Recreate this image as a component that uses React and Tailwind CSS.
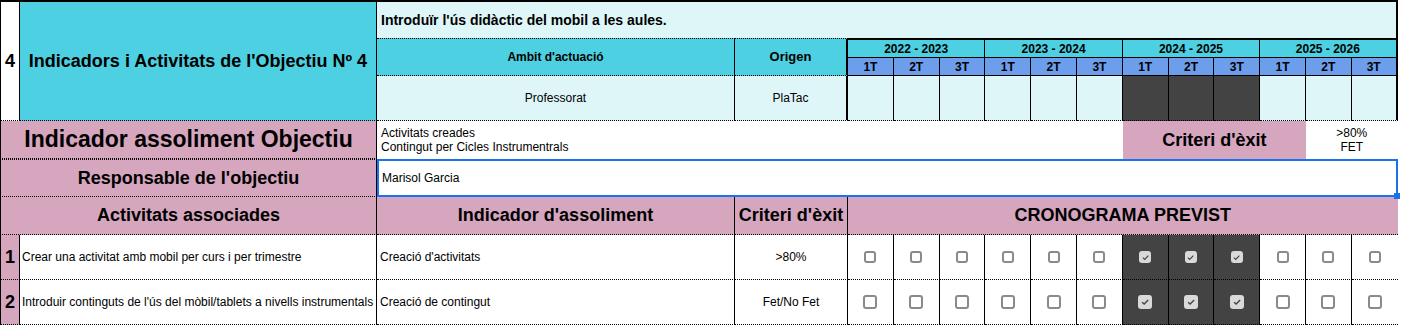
import clsx from "clsx"

const years = ["2022 - 2023", "2023 - 2024", "2024 - 2025", "2025 - 2026"]
const quarters = Array.from({ length: 12 }, (_, i) => ["1T", "2T", "3T"][i % 3])
const isActive = (i) => i >= 6 && i <= 8

const activitats = [
  { n: "1", text: "Crear una activitat amb mobil per curs i per trimestre", ind: "Creació d'activitats", crit: ">80%", big: false },
  { n: "2", text: "Introduir continguts de l'ús del mòbil/tablets a nivells instrumentals", ind: "Creació de contingut", crit: "Fet/No Fet", big: true },
]

const colStart = [
  "col-start-5", "col-start-6", "col-start-7", "col-start-8", "col-start-9", "col-start-10",
  "col-start-11", "col-start-12", "col-start-13", "col-start-14", "col-start-15", "col-start-16",
]
const yearStart = ["col-start-5", "col-start-8", "col-start-11", "col-start-14"]

// solid right edge, dotted bottom edge, like the sheet grid
const grid = "border-r border-b border-black [border-bottom-style:dotted]"

const Check = ({ checked, big }) => (
  <span
    className={clsx(
      "flex items-center justify-center rounded-[3px]",
      big ? "size-[14px]" : "size-3",
      checked ? "bg-[#d9d9d9]" : "border-2 border-[#8a8a8a] bg-white"
    )}
  >
    {checked && (
      <svg viewBox="0 0 12 12" className={big ? "size-[10px]" : "size-[9px]"}>
        <path d="M2.5 6.2 L5 8.5 L9.8 3.6" fill="none" stroke="#444" strokeWidth="1.6" />
      </svg>
    )}
  </span>
)

const App = () => (
  <div className="h-[327px] w-[1401px] bg-white font-['Liberation_Sans',Arial,sans-serif] text-black">
    <div className="grid w-[1398px] grid-cols-[20px_357px_358px_113px_repeat(12,45.8px)] grid-rows-[36px_20px_18px_45px_38px_38px_38px_45px_45px] border-t-2 border-black">
      {/* title block */}
      <div className={clsx(grid, "row-span-4 row-start-1 col-start-1 flex items-center justify-center border-l text-[18px] font-bold")}>
        4
      </div>
      <div className={clsx(grid, "row-span-4 row-start-1 col-start-2 flex items-center justify-center bg-[#4dd0e1] text-[18px] font-bold")}>
        Indicadors i Activitats de l'Objectiu Nº 4
      </div>
      <div className="col-span-14 col-start-3 row-start-1 flex items-center border-r-2 border-black bg-[#dff6f8] pl-1 text-[14px] font-bold">
        Introduïr l'ús didàctic del mobil a les aules.
      </div>

      <div className={clsx(grid, "col-start-3 row-span-2 row-start-2 flex items-center justify-center border-t bg-[#4dd0e1] text-[12px] font-bold [border-top-style:dotted]")}>
        Ambit d'actuació
      </div>
      <div className="col-start-4 row-span-2 row-start-2 flex items-center justify-center border-t border-r-2 border-b border-black bg-[#4dd0e1] text-[13px] font-bold [border-top-style:dotted] [border-bottom-style:dotted]">
        Origen
      </div>
      {years.map((y, i) => (
        <div
          key={y}
          className={clsx(
            yearStart[i],
            "col-span-3 row-start-2 flex items-center justify-center border-t-2 border-b border-black bg-[#4dd0e1] text-[12px] font-bold",
            i === 3 ? "border-r-2" : "border-r"
          )}
        >
          {y}
        </div>
      ))}
      {quarters.map((q, i) => (
        <div
          key={"q" + i}
          className={clsx(
            colStart[i],
            "row-start-3 flex items-center justify-center border-b border-black bg-[#6d9eeb] text-[12px] font-bold",
            i === 11 ? "border-r-2" : "border-r"
          )}
        >
          {q}
        </div>
      ))}

      <div className={clsx(grid, "col-start-3 row-start-4 flex items-center justify-center bg-[#dff6f8] text-[12px]")}>
        Professorat
      </div>
      <div className="col-start-4 row-start-4 flex items-center justify-center border-r-2 border-b border-black bg-[#dff6f8] text-[12px] [border-bottom-style:dotted]">
        PlaTac
      </div>
      {quarters.map((_, i) => (
        <div
          key={"c" + i}
          className={clsx(
            colStart[i],
            "row-start-4 border-b border-black [border-bottom-style:dotted]",
            i === 11 ? "border-r-2" : "border-r",
            isActive(i) ? "bg-[#434343]" : "bg-[#dff6f8]"
          )}
        />
      ))}

      {/* indicador / responsable */}
      <div className={clsx(grid, "col-span-2 col-start-1 row-start-5 flex items-center justify-center border-l bg-[#d5a6bd] text-[23px] font-bold")}>
        Indicador assoliment Objectiu
      </div>
      <div className="col-span-8 col-start-3 row-start-5 flex flex-col justify-center pl-1 text-[12px] leading-[14px]">
        <span>Activitats creades</span>
        <span>Contingut per Cicles Instrumentrals</span>
      </div>
      <div className="col-span-4 col-start-11 row-start-5 flex items-center justify-center bg-[#d5a6bd] text-[18px] font-bold">
        Criteri d'èxit
      </div>
      <div className="col-span-2 col-start-15 row-start-5 flex flex-col items-center justify-center text-[12px] leading-[14px]">
        <span>&gt;80%</span>
        <span>FET</span>
      </div>

      <div className={clsx(grid, "col-span-2 col-start-1 row-start-6 flex items-center justify-center border-l border-t bg-[#d5a6bd] text-[18px] font-bold [border-top-style:dotted]")}>
        Responsable de l'objectiu
      </div>
      <div className="relative col-span-14 col-start-3 row-start-6 flex items-center border-2 border-[#1a73e8] pl-[3px] text-[12px]">
        Marisol Garcia
        <span className="absolute -right-[4px] -bottom-[4px] size-[6px] bg-[#1a73e8]" />
      </div>

      {/* activitats header */}
      <div className={clsx(grid, "col-span-2 col-start-1 row-start-7 flex items-center justify-center border-l bg-[#d5a6bd] text-[18px] font-bold")}>
        Activitats associades
      </div>
      <div className={clsx(grid, "col-start-3 row-start-7 flex items-center justify-center bg-[#d5a6bd] text-[18px] font-bold")}>
        Indicador d'assoliment
      </div>
      <div className={clsx(grid, "col-start-4 row-start-7 flex items-center justify-center bg-[#d5a6bd] text-[18px] font-bold")}>
        Criteri d'èxit
      </div>
      <div className="col-span-12 col-start-5 row-start-7 flex items-center justify-center border-b border-black bg-[#d5a6bd] text-[18px] font-bold [border-bottom-style:dotted]">
        CRONOGRAMA PREVIST
      </div>

      {/* activitats rows */}
      {activitats.map((a, r) => (
        <div key={a.n} className="contents">
          <div className={clsx(grid, r === 0 ? "row-start-8" : "row-start-9", "col-start-1 flex items-center justify-center border-l bg-[#d5a6bd] text-[18px] font-bold")}>
            {a.n}
          </div>
          <div className={clsx(grid, r === 0 ? "row-start-8" : "row-start-9", "col-start-2 flex items-center pl-[2px] text-[12px]")}>
            {a.text}
          </div>
          <div className={clsx(grid, r === 0 ? "row-start-8" : "row-start-9", "col-start-3 flex items-center pl-[3px] text-[12px]")}>
            {a.ind}
          </div>
          <div className={clsx(grid, r === 0 ? "row-start-8" : "row-start-9", "col-start-4 flex items-center justify-center text-[12px]")}>
            {a.crit}
          </div>
          {quarters.map((_, i) => (
            <div
              key={i}
              className={clsx(
                grid,
                colStart[i],
                r === 0 ? "row-start-8" : "row-start-9",
                "flex items-center justify-center",
                i === 11 && "border-r-0",
                isActive(i) && "bg-[#434343]"
              )}
            >
              <Check checked={isActive(i)} big={a.big} />
            </div>
          ))}
        </div>
      ))}
    </div>
  </div>
)

export default App
